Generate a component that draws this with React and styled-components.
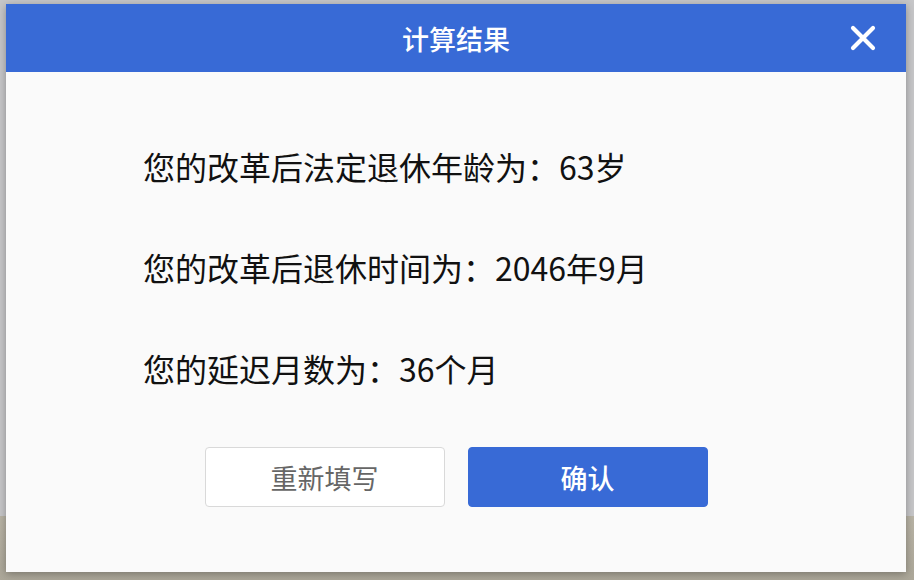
import React from 'react';
import styled, { createGlobalStyle } from 'styled-components';

const GlobalStyle = createGlobalStyle`
  html, body {
    margin: 0;
    padding: 0;
  }
  body {
    width: 914px;
    height: 580px;
    overflow: hidden;
    font-family: "Noto Sans CJK SC", "Noto Sans", sans-serif;
    background: linear-gradient(to bottom, #c6c6c8 0, #c6c6c8 516px, #b8b3a5 516px, #aca799 100%);
  }
`;

const Modal = styled.div`
  margin: 4px 0 0 6px;
  width: 900px;
  height: 568px;
  background: #fafafa;
  box-shadow: 0 2px 8px rgba(0, 0, 0, 0.3);
  display: flex;
  flex-direction: column;
`;

const Header = styled.div`
  position: relative;
  height: 68px;
  background: #386ad6;
  display: flex;
  align-items: center;
  justify-content: center;
`;

const Title = styled.h2`
  margin: 0;
  color: #fff;
  font-size: 27px;
  font-weight: 500;
  line-height: 1;
`;

const CloseButton = styled.button`
  position: absolute;
  right: 29px;
  top: 20px;
  width: 28px;
  height: 28px;
  padding: 0;
  border: 0;
  background: transparent;
  cursor: pointer;
  display: flex;
  align-items: center;
  justify-content: center;
`;

const Content = styled.div`
  flex: 1;
  display: flex;
  flex-direction: column;
`;

const ResultList = styled.ul`
  list-style: none;
  margin: 0;
  padding: 74px 0 0 137px;
  display: flex;
  flex-direction: column;
  gap: 61px;
`;

const ResultItem = styled.li`
  font-size: 32px;
  line-height: 40px;
  color: #111;
`;

const Actions = styled.div`
  margin-top: 59px;
  display: flex;
  justify-content: center;
  gap: 23px;
`;

const ActionButton = styled.button`
  width: 240px;
  height: 60px;
  border-radius: 4px;
  font-family: inherit;
  font-size: 27px;
  cursor: pointer;
  border: 1px solid ${(p) => (p.primary ? '#386ad6' : '#d9d9d9')};
  background: ${(p) => (p.primary ? '#386ad6' : '#fff')};
  color: ${(p) => (p.primary ? '#fff' : '#666')};
  font-weight: ${(p) => (p.primary ? 500 : 400)};
`;

const results = [
  '您的改革后法定退休年龄为：63岁',
  '您的改革后退休时间为：2046年9月',
  '您的延迟月数为：36个月',
];

const App = () => {
  return (
    <>
      <GlobalStyle />
      <Modal>
        <Header>
          <Title>计算结果</Title>
          <CloseButton aria-label="关闭">
            <svg width="26" height="26" viewBox="0 0 26 26">
              <path d="M3 3 L23 23 M23 3 L3 23" stroke="#fff" strokeWidth="4.2" strokeLinecap="round" />
            </svg>
          </CloseButton>
        </Header>
        <Content>
          <ResultList>
            {results.map((r) => (
              <ResultItem key={r}>{r}</ResultItem>
            ))}
          </ResultList>
          <Actions>
            <ActionButton>重新填写</ActionButton>
            <ActionButton primary>确认</ActionButton>
          </Actions>
        </Content>
      </Modal>
    </>
  );
};

export default App;
